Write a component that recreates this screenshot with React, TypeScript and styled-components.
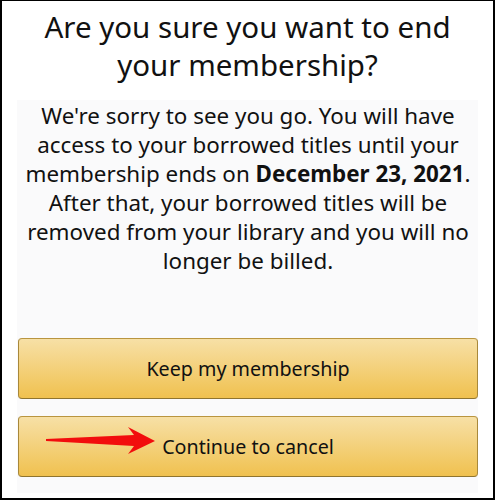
import * as React from 'react';
import styled, {createGlobalStyle} from 'styled-components';

const GlobalStyle = createGlobalStyle`
  html, body {
    margin: 0;
    padding: 0;
    background: #ffffff;
  }
  body {
    font-family: "Noto Sans", "Open Sans", Arial, sans-serif;
    color: #111111;
  }
`;

const Arrow = () => (
    <ArrowSvg width="112" height="30" viewBox="0 0 112 30">
        <polygon
            points="0,12 88,8 82,0 109,14 82,27 88,19 0,14"
            fill="#f20d0d"
        />
    </ArrowSvg>
);

class App extends React.Component<{}, {}> {
    public render() {
        return (
            <Frame>
                <GlobalStyle/>
                <Title>
                    Are you sure you want to end<br/>
                    your membership?
                </Title>
                <Panel>
                    <Message>
                        We're sorry to see you go. You will have<br/>
                        access to your borrowed titles until your<br/>
                        membership ends on <strong>December 23, 2021</strong>.<br/>
                        After that, your borrowed titles will be<br/>
                        removed from your library and you will no<br/>
                        longer be billed.
                    </Message>
                    <Actions>
                        <Button>Keep my membership</Button>
                        <Button>
                            <Arrow/>
                            Continue to cancel
                        </Button>
                    </Actions>
                </Panel>
            </Frame>
        );
    }
}

const Frame = styled.div`
  box-sizing: border-box;
  width: 495px;
  height: 500px;
  border: 2px solid #000000;
  border-top-width: 1px;
  display: flex;
  flex-direction: column;
  padding: 7px 15px 5px 15px;
`;

const Title = styled.h1`
  margin: 0;
  font-size: 29.5px;
  line-height: 38px;
  font-weight: 400;
  text-align: center;
  color: #111111;
`;

const Panel = styled.div`
  flex: 1;
  margin-top: 16px;
  background: #fafafb;
  display: flex;
  flex-direction: column;
  padding: 1px 0 16px 1px;
`;

const Message = styled.p`
  margin: 0;
  font-size: 22.4px;
  line-height: 29px;
  text-align: center;
  color: #111111;
  white-space: nowrap;

  strong {
    font-weight: 700;
  }
`;

const Actions = styled.div`
  margin-top: auto;
  display: flex;
  flex-direction: column;
  gap: 17px;
`;

const Button = styled.div`
  position: relative;
  box-sizing: border-box;
  height: 61px;
  display: flex;
  align-items: center;
  justify-content: center;
  border: 1px solid;
  border-color: #b9953f #a8883a #8f742f;
  border-radius: 4px;
  background: linear-gradient(to bottom, #f7e0a6, #f0c14f);
  font-size: 19.7px;
  color: #111111;
`;

const ArrowSvg = styled.svg`
  position: absolute;
  left: 27px;
  top: 10px;
`;

export default App;
